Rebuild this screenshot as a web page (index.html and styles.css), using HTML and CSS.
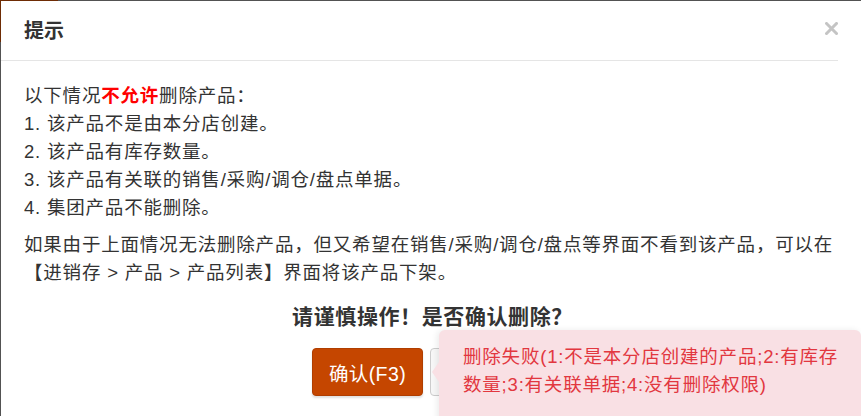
FILE: index.html
```html
<!DOCTYPE html>
<html lang="zh-CN">
<head>
<meta charset="utf-8">
<title>提示</title>
<link rel="stylesheet" href="styles.css">
</head>
<body>
<div class="page">
  <div class="brand-block"></div>
  <div class="modal">
    <div class="modal-header">
      <h4 class="modal-title">提示</h4>
      <button class="close" type="button" aria-label="关闭">
        <svg width="13" height="13" viewBox="0 0 13 13"><path d="M1.5 1.5 L11.5 11.5 M11.5 1.5 L1.5 11.5" stroke="#c4c4c4" stroke-width="3" stroke-linecap="square"/></svg>
      </button>
    </div>
    <div class="modal-body">
      <div class="rules">
        <div>以下情况<b class="danger">不允许</b>删除产品：</div>
        <div>1. 该产品不是由本分店创建。</div>
        <div>2. 该产品有库存数量。</div>
        <div>3. 该产品有关联的销售/采购/调仓/盘点单据。</div>
        <div>4. 集团产品不能删除。</div>
      </div>
      <p class="note">如果由于上面情况无法删除产品，但又希望在销售/采购/调仓/盘点等界面不看到该产品，可以在【进销存 &gt; 产品 &gt; 产品列表】界面将该产品下架。</p>
      <div class="confirm-title">请谨慎操作！是否确认删除？</div>
      <div class="actions">
        <button class="btn btn-primary" type="button">确认(F3)</button>
        <button class="btn btn-default" type="button" aria-label="取消"></button>
      </div>
    </div>
  </div>
  <div class="tip">
    <span class="tip-arrow"></span>
    删除失败(1:不是本分店创建的产品;2:有库存数量;3:有关联单据;4:没有删除权限)
  </div>
</div>
</body>
</html>
```

FILE: styles.css
```css
html, body {
  margin: 0;
  padding: 0;
  width: 861px;
  height: 416px;
  overflow: hidden;
}
body {
  background: #525252;
  font-family: "Liberation Sans", "Noto Sans CJK SC", sans-serif;
  color: #333;
}
.page {
  position: relative;
  width: 861px;
  height: 416px;
  overflow: hidden;
}
.brand-block {
  position: absolute;
  left: 0;
  top: 0;
  width: 58px;
  height: 42px;
  background: #6e2c05;
}
.modal {
  position: absolute;
  left: 1px;
  top: 1px;
  width: 900px;
  height: 440px;
  background: #fff;
}
.modal-header {
  height: 60px;
  border-bottom: 1px solid #e5e5e5;
  display: flex;
  align-items: center;
  justify-content: space-between;
  padding: 0 0 0 23px;
  width: 837px;
  box-sizing: border-box;
}
.modal-title {
  margin: 0;
  font-size: 20px;
  font-weight: bold;
  color: #333;
  line-height: 24px;
}
.close {
  border: 0;
  background: none;
  padding: 0;
  margin: -5px 0 0 0;
  width: 13px;
  height: 13px;
  display: flex;
}
.modal-body {
  padding: 21px 0 0 23px;
  font-size: 18.5px;
  letter-spacing: 0.8px;
  line-height: 28px;
}
.rules div {
  white-space: nowrap;
}
.danger {
  color: #f00;
  font-weight: bold;
}
.note {
  margin: 9px 0 0 0;
  width: 826px;
}
.confirm-title {
  width: 817px;
  margin-top: 15px;
  text-align: center;
  font-size: 21px;
  letter-spacing: 0.6px;
  font-weight: bold;
  line-height: 30px;
  color: #333;
}
.actions {
  width: 805px;
  display: flex;
  justify-content: center;
  gap: 7px;
  margin-top: 16px;
}
.btn {
  height: 48px;
  width: 111px;
  border-radius: 4px;
  font-family: "Liberation Sans", "Noto Sans CJK SC", sans-serif;
  font-size: 19.5px;
  letter-spacing: 0.4px;
  padding: 0;
  box-sizing: border-box;
}
.btn-primary {
  background: #c54600;
  color: #fff;
  border: 1px solid #b03e00;
  box-shadow: 0 2px 2px rgba(0, 0, 0, 0.12);
}
.btn-default {
  background: #f7f7f7;
  color: #333;
  border: 1px solid #ccc;
}
.tip {
  position: absolute;
  left: 439px;
  top: 330px;
  width: 422px;
  height: 100px;
  box-sizing: border-box;
  padding: 13px 16px 0 24px;
  background: #f9e0e4;
  color: #e2373f;
  font-size: 18.5px;
  letter-spacing: 0.8px;
  line-height: 28px;
  border-radius: 6px 6px 0 0;
  box-shadow: -2px 0 6px rgba(0, 0, 0, 0.08);
}
.tip-arrow {
  position: absolute;
  left: -7px;
  top: 32px;
  width: 0;
  height: 0;
  border-top: 10px solid transparent;
  border-bottom: 10px solid transparent;
  border-right: 7px solid #f9e0e4;
}
```
